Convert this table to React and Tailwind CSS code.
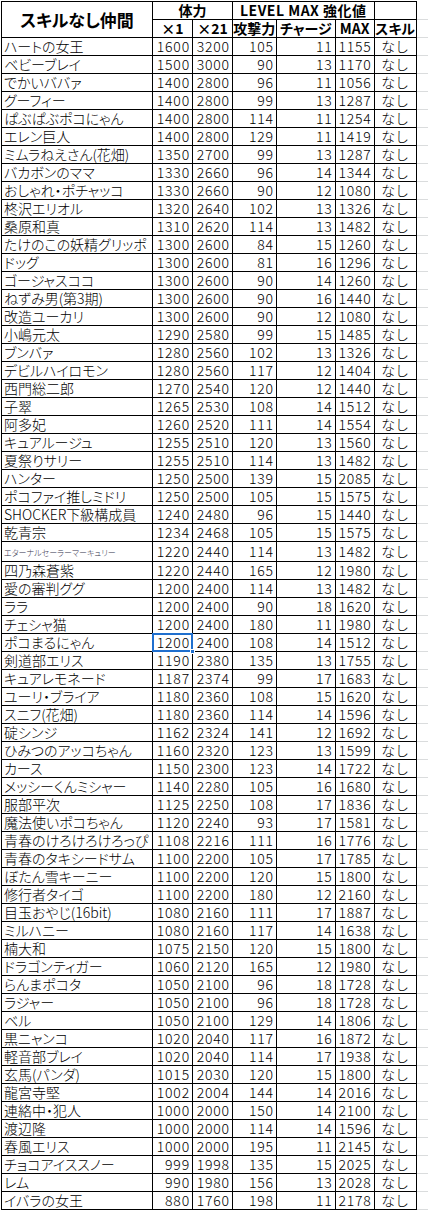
import React from "react";

const rows = [
  ["ハートの女王", 1600, 3200, 105, 11, 1155],
  ["ベビーブレイ", 1500, 3000, 90, 13, 1170],
  ["でかいババァ", 1400, 2800, 96, 11, 1056],
  ["グーフィー", 1400, 2800, 99, 13, 1287],
  ["ぱぶぱぶポコにゃん", 1400, 2800, 114, 11, 1254],
  ["エレン巨人", 1400, 2800, 129, 11, 1419],
  ["ミムラねえさん(花畑)", 1350, 2700, 99, 13, 1287],
  ["バカボンのママ", 1330, 2660, 96, 14, 1344],
  ["おしゃれ・ポチャッコ", 1330, 2660, 90, 12, 1080],
  ["柊沢エリオル", 1320, 2640, 102, 13, 1326],
  ["桑原和真", 1310, 2620, 114, 13, 1482],
  ["たけのこの妖精グリッポ", 1300, 2600, 84, 15, 1260],
  ["ドッグ", 1300, 2600, 81, 16, 1296],
  ["ゴージャスココ", 1300, 2600, 90, 14, 1260],
  ["ねずみ男(第3期)", 1300, 2600, 90, 16, 1440],
  ["改造ユーカリ", 1300, 2600, 90, 12, 1080],
  ["小嶋元太", 1290, 2580, 99, 15, 1485],
  ["ブンバァ", 1280, 2560, 102, 13, 1326],
  ["デビルハイロモン", 1280, 2560, 117, 12, 1404],
  ["西門総二郎", 1270, 2540, 120, 12, 1440],
  ["子翠", 1265, 2530, 108, 14, 1512],
  ["阿多妃", 1260, 2520, 111, 14, 1554],
  ["キュアルージュ", 1255, 2510, 120, 13, 1560],
  ["夏祭りサリー", 1255, 2510, 114, 13, 1482],
  ["ハンター", 1250, 2500, 139, 15, 2085],
  ["ポコファイ推しミドリ", 1250, 2500, 105, 15, 1575],
  ["SHOCKER下級構成員", 1240, 2480, 96, 15, 1440],
  ["乾青宗", 1234, 2468, 105, 15, 1575],
  ["エターナルセーラーマーキュリー", 1220, 2440, 114, 13, 1482],
  ["四乃森蒼紫", 1220, 2440, 165, 12, 1980],
  ["愛の審判ググ", 1200, 2400, 114, 13, 1482],
  ["ララ", 1200, 2400, 90, 18, 1620],
  ["チェシャ猫", 1200, 2400, 180, 11, 1980],
  ["ポコまるにゃん", 1200, 2400, 108, 14, 1512],
  ["剣道部エリス", 1190, 2380, 135, 13, 1755],
  ["キュアレモネード", 1187, 2374, 99, 17, 1683],
  ["ユーリ・ブライア", 1180, 2360, 108, 15, 1620],
  ["スニフ(花畑)", 1180, 2360, 114, 14, 1596],
  ["碇シンジ", 1162, 2324, 141, 12, 1692],
  ["ひみつのアッコちゃん", 1160, 2320, 123, 13, 1599],
  ["カース", 1150, 2300, 123, 14, 1722],
  ["メッシーくんミシャー", 1140, 2280, 105, 16, 1680],
  ["服部平次", 1125, 2250, 108, 17, 1836],
  ["魔法使いポコちゃん", 1120, 2240, 93, 17, 1581],
  ["青春のけろけろけろっぴ", 1108, 2216, 111, 16, 1776],
  ["青春のタキシードサム", 1100, 2200, 105, 17, 1785],
  ["ぼたん雪キーニー", 1100, 2200, 120, 15, 1800],
  ["修行者タイゴ", 1100, 2200, 180, 12, 2160],
  ["目玉おやじ(16bit)", 1080, 2160, 111, 17, 1887],
  ["ミルハニー", 1080, 2160, 117, 14, 1638],
  ["楠大和", 1075, 2150, 120, 15, 1800],
  ["ドラゴンティガー", 1060, 2120, 165, 12, 1980],
  ["らんまポコタ", 1050, 2100, 96, 18, 1728],
  ["ラジャー", 1050, 2100, 96, 18, 1728],
  ["ベル", 1050, 2100, 129, 14, 1806],
  ["黒ニャンコ", 1020, 2040, 117, 16, 1872],
  ["軽音部ブレイ", 1020, 2040, 114, 17, 1938],
  ["玄馬(パンダ)", 1015, 2030, 120, 15, 1800],
  ["龍宮寺堅", 1002, 2004, 144, 14, 2016],
  ["連絡中・犯人", 1000, 2000, 150, 14, 2100],
  ["渡辺隆", 1000, 2000, 114, 14, 1596],
  ["春風エリス", 1000, 2000, 195, 11, 2145],
  ["チョコアイススノー", 999, 1998, 135, 15, 2025],
  ["レム", 990, 1980, 156, 13, 2028],
  ["イバラの女王", 880, 1760, 198, 11, 2178],
];

const cell = "border border-black p-0 h-[18px]";
const num = `${cell} text-right pr-[2px] tracking-[0.8px]`;
const head = `${cell} text-center font-bold text-[14px]`;
const grid = "p-0 h-[18px] border-b border-[#dadcdd]";

const SELECTED = "ポコまるにゃん";

const App = () => {
  return (
    <div className="w-[428px] h-[1211px] bg-white overflow-hidden pt-[1px] pl-[1px] font-['Noto_Sans_CJK_JP',sans-serif] font-light text-black [font-feature-settings:'palt']">
      <table className="table-fixed border-collapse text-[14px] leading-[17px]">
        <colgroup>
          <col className="w-[151px]" />
          <col className="w-[40px]" />
          <col className="w-[40px]" />
          <col className="w-[44px]" />
          <col className="w-[59px]" />
          <col className="w-[39px]" />
          <col className="w-[42px]" />
          <col className="w-[12px]" />
        </colgroup>
        <tbody>
          {/* header */}
          <tr>
            <td rowSpan={2} className={`${cell} text-center font-bold text-[17px]`}>
              スキルなし仲間
            </td>
            <td colSpan={2} className={head}>
              体力
            </td>
            <td colSpan={3} className={`${head} tracking-[0.5px]`}>
              LEVEL MAX 強化値
            </td>
            <td className={cell}></td>
            <td className={grid}></td>
          </tr>
          <tr>
            <td className={head}>×1</td>
            <td className={head}>×21</td>
            <td className={head}>攻撃力</td>
            <td className={head}>チャージ</td>
            <td className={`${head} text-[12px]`}>MAX</td>
            <td className={head}>スキル</td>
            <td className={grid}></td>
          </tr>
          {/* data rows */}
          {rows.map(([name, x1, x21, atk, charge, max]) => (
            <tr key={name}>
              <td className={`${cell} pl-[2px] whitespace-nowrap overflow-hidden`}>
                {name === "エターナルセーラーマーキュリー" ? (
                  <span className="text-[8px] text-[#33334d] align-middle">{name}</span>
                ) : (
                  name
                )}
              </td>
              <td className={`${num} ${name === SELECTED ? "relative" : ""}`}>
                {x1}
                {name === SELECTED && (
                  <>
                    <div className="absolute -inset-[1px] border-2 border-[#1f6fce] pointer-events-none"></div>
                    <div className="absolute -right-[3px] -bottom-[3px] w-[5px] h-[5px] bg-[#1f6fce] border border-white"></div>
                  </>
                )}
              </td>
              <td className={num}>{x21}</td>
              <td className={num}>{atk}</td>
              <td className={num}>{charge}</td>
              <td className={num}>{max}</td>
              <td className={`${cell} text-center tracking-[1px]`}>なし</td>
              <td className={grid}></td>
            </tr>
          ))}
        </tbody>
      </table>
    </div>
  );
};

export default App;
